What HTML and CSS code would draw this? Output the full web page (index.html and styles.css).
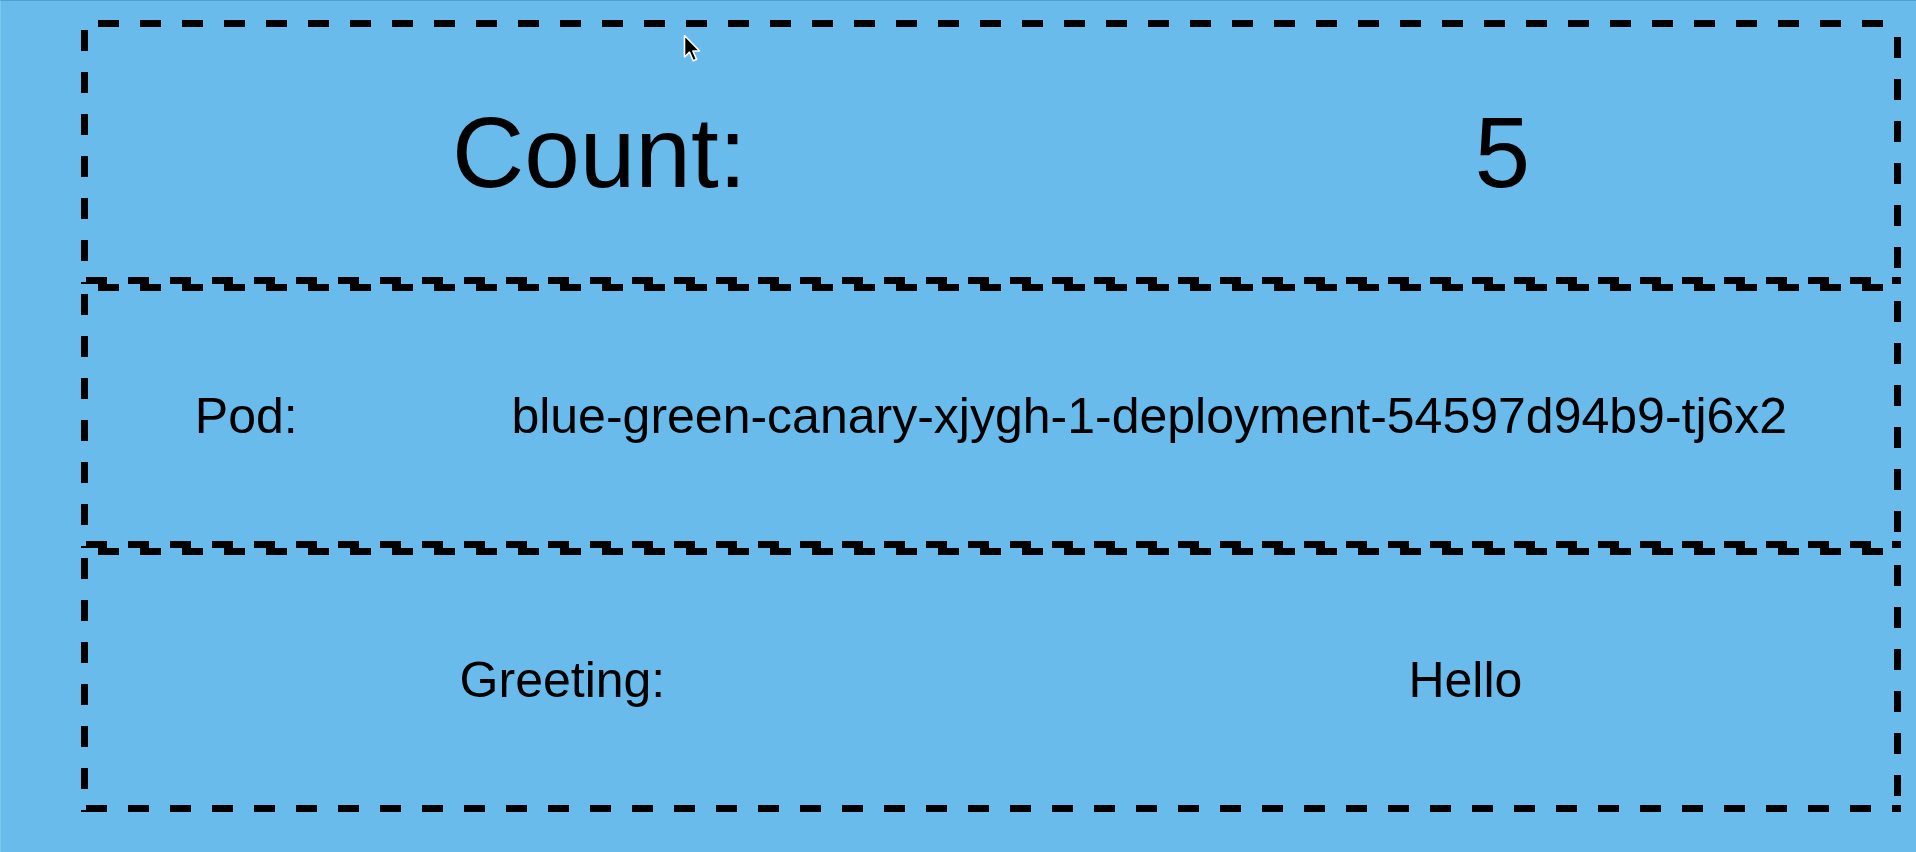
FILE: index.html
```html
<!DOCTYPE html>
<html lang="en">
<head>
<meta charset="utf-8">
<title>Blue Green Canary</title>
<link rel="stylesheet" href="styles.css">
</head>
<body>
<div class="page">
  <div class="box">
    <div class="cell big">Count:</div>
    <div class="cell big">5</div>
  </div>
  <div class="box">
    <div class="cell">Pod:</div>
    <div class="cell">blue-green-canary-xjygh-1-deployment-54597d94b9-tj6x2</div>
  </div>
  <div class="box">
    <div class="cell">Greeting:</div>
    <div class="cell">Hello</div>
  </div>
  <svg class="cursor" width="20" height="30" viewBox="0 0 20 30" aria-hidden="true">
    <path d="M1.5 1.5 L1.5 23 L6.5 18.2 L10.2 26.8 L13.6 25.3 L9.9 17 L16.6 17 Z" fill="#000" stroke="#fff" stroke-width="1.6" stroke-linejoin="round"/>
  </svg>
</div>
</body>
</html>
```

FILE: styles.css
```css
html, body {
  margin: 0;
  padding: 0;
  background: #69bbec;
}

body {
  font-family: "Liberation Sans", Arial, Helvetica, sans-serif;
  color: #000;
}

.page {
  position: relative;
  height: 852px;
  box-sizing: border-box;
  border-top: 1px solid #4f9fd2;
  border-left: 1px solid #7cc6f0;
  padding: 19px 15px 0 80px;
  display: flex;
  flex-direction: column;
}

/* long-dash border (21px dash / 21px gap), 7px thick */
.box {
  height: 264px;
  box-sizing: border-box;
  padding: 7px;
  display: flex;
  align-items: center;
  justify-content: space-around;
  background:
    repeating-linear-gradient(90deg, transparent 0 17px, #000 17px 38px, transparent 38px 42px) left top / 100% 7px no-repeat,
    repeating-linear-gradient(90deg, transparent 0 5px, #000 5px 26px, transparent 26px 42px) left bottom / 100% 7px no-repeat,
    repeating-linear-gradient(180deg, transparent 0 10px, #000 10px 31px, transparent 31px 42px) left top / 7px 100% no-repeat,
    repeating-linear-gradient(180deg, transparent 0 17px, #000 17px 38px, transparent 38px 42px) right top / 7px 100% no-repeat;
}

.cell {
  font-size: 50px;
  line-height: 1;
  white-space: nowrap;
}

.cell.big {
  font-size: 100px;
}

.cursor {
  position: absolute;
  left: 682px;
  top: 33px;
}
```
